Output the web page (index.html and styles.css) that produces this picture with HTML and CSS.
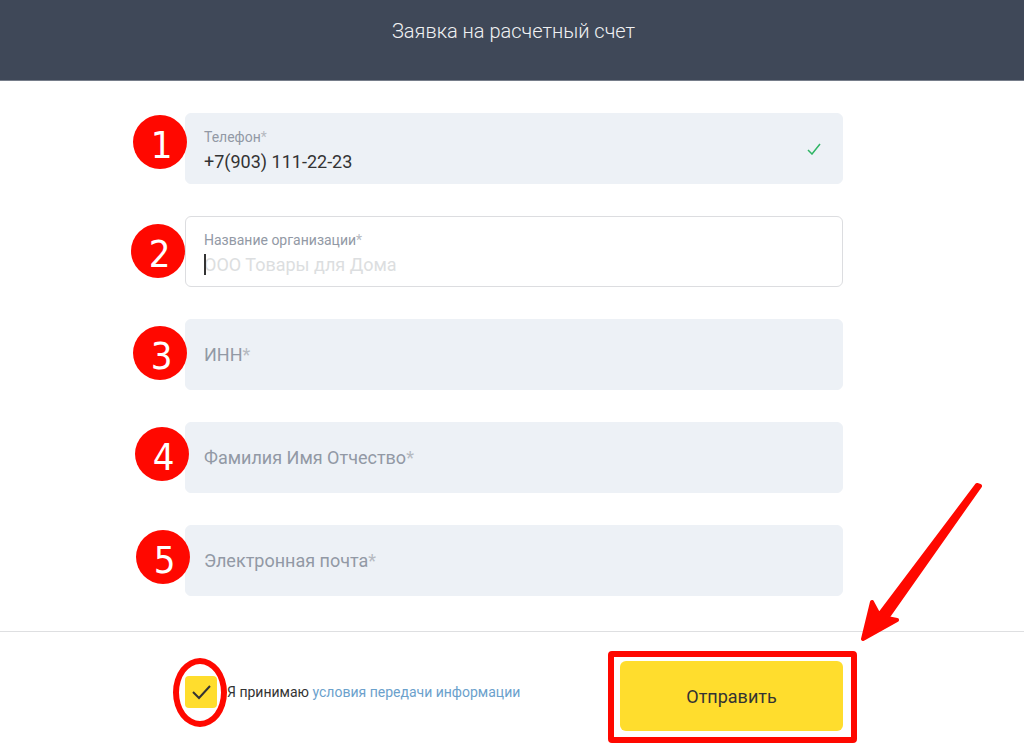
FILE: index.html
```html
<!DOCTYPE html>
<html lang="ru">
<head>
<meta charset="utf-8">
<meta name="viewport" content="width=device-width, initial-scale=1">
<title>Заявка на расчетный счет</title>
<link rel="stylesheet" href="styles.css">
</head>
<body>
<header class="header"><h1 class="title">Заявка на расчетный счет</h1></header>
<form class="form">
  <main class="section">
    <div class="column fields">
      <div class="field">
        <label class="caption small" for="phone">Телефон<span class="star">*</span></label>
        <input class="control filled" id="phone" type="tel" value="+7(903) 111-22-23">
        <svg class="valid" viewBox="0 0 14 12" aria-hidden="true"><path d="M1 7l4 4 8-10"/></svg>
        <span class="badge b1">1</span>
      </div>
      <div class="field active">
        <label class="caption small" for="org">Название организации<span class="star">*</span></label>
        <input class="control filled" id="org" type="text" placeholder="ООО Товары для Дома">
        <span class="caret"></span>
        <span class="badge b2">2</span>
      </div>
      <div class="field">
        <label class="caption" for="inn">ИНН<span class="star">*</span></label>
        <input class="control" id="inn" type="text">
        <span class="badge b3">3</span>
      </div>
      <div class="field">
        <label class="caption" for="name">Фамилия Имя Отчество<span class="star">*</span></label>
        <input class="control" id="name" type="text">
        <span class="badge b4">4</span>
      </div>
      <div class="field">
        <label class="caption" for="mail">Электронная почта<span class="star">*</span></label>
        <input class="control" id="mail" type="email">
        <span class="badge b5">5</span>
      </div>
    </div>
  </main>
  <footer class="section footer">
    <div class="column actions">
      <div class="consent">
        <span class="tick">
          <input class="checkbox" id="agree" type="checkbox" checked>
          <svg class="mark" viewBox="0 0 20 16" aria-hidden="true"><path d="M1 8l6 6L18 2"/></svg>
          <span class="ring"></span>
        </span>
        <span><label for="agree">Я принимаю</label> <a class="link" href="#terms">условия передачи информации</a></span>
      </div>
      <div class="send">
        <button class="submit" type="submit">Отправить</button>
        <span class="frame"></span>
        <svg class="arrow" viewBox="0 0 124 162" aria-hidden="true"><path d="M120 4L27 136L37 138L3 157L12 120L19 133L117 3Z"/></svg>
      </div>
    </div>
  </footer>
</form>
</body>
</html>
```
FILE: styles.css
```css
* { box-sizing: border-box; }
body {
  margin: 0;
  background: #fff;
  color: #333;
  font-family: Roboto, "Liberation Sans", Arial, sans-serif;
  font-size: 14px;
}
.header {
  display: flex;
  justify-content: center;
  height: 81px;
  padding-top: 15px;
  padding-left: 3px;
  border-bottom: 1px solid #767d8a;
  background: #3f4858;
}
.title {
  margin: 0;
  color: #f0f1f3;
  font: 300 20px/32px Roboto, sans-serif;
}
.section { padding: 32px 16px 35px 20px; }
.column { max-width: 658px; margin: 0 auto; }
.fields { display: grid; gap: 32px; }
.field {
  position: relative;
  display: grid;
  height: 71px;
  border: 1px solid #edf1f6;
  border-radius: 6px;
  background: #edf1f6;
}
.field.active { border-color: #dcdde0; background: #fff; }
.caption, .control { grid-area: 1 / 1; }
.caption {
  z-index: 1;
  align-self: center;
  justify-self: start;
  margin-left: 18px;
  color: #9299a5;
  font-size: 18px;
  line-height: 24px;
}
.caption.small {
  align-self: start;
  padding-top: 14px;
  font-size: 14px;
  line-height: 18px;
}
.star { color: #b6bac1; }
.control {
  width: 100%;
  height: 100%;
  min-width: 0;
  padding: 0 18px;
  border: 0;
  outline: 0;
  background: transparent;
  color: #333;
  font: inherit;
  font-size: 18px;
}
.control.filled { padding-top: 25px; }
.control::placeholder { color: #dcdee0; opacity: 1; }
.valid {
  position: absolute;
  top: 29px;
  right: 21px;
  width: 14px;
  height: 12px;
  fill: none;
  stroke: #2fb565;
  stroke-width: 1.5;
}
.caret {
  position: absolute;
  top: 37px;
  left: 18px;
  width: 2px;
  height: 21px;
  background: #333;
}
.badge {
  position: absolute;
  width: 54px;
  height: 54px;
  padding: 3px 0 0 3px;
  border-radius: 50%;
  background: #ff0800;
  color: #fff;
  font: 38px/54px "DejaVu Sans Condensed", "DejaVu Sans", sans-serif;
  text-align: center;
}
.b1 { top: 1px; left: -53px; }
.b2 { top: 7px; left: -55px; }
.b3 { top: 6px; left: -53px; }
.b4 { top: 4px; left: -51px; }
.b5 { top: 4px; left: -50px; }
.footer {
  padding-top: 29px;
  padding-bottom: 13px;
  border-top: 1px solid #dedfe1;
}
.actions { display: flex; justify-content: space-between; align-items: center; }
.consent { display: flex; align-items: center; gap: 10px; padding-bottom: 8px; }
.tick { position: relative; display: flex; }
.checkbox {
  width: 32px;
  height: 32px;
  margin: 0;
  appearance: none;
  border-radius: 4px;
  background: #ffdd2d;
}
.mark {
  position: absolute;
  top: 8px;
  left: 7px;
  width: 20px;
  height: 16px;
  fill: none;
  stroke: #333;
  stroke-width: 2;
  pointer-events: none;
}
.ring {
  position: absolute;
  top: -18px;
  left: -12px;
  width: 54px;
  height: 69px;
  border: 6px solid #ff0800;
  border-radius: 50%;
  pointer-events: none;
}
.link { color: #6ba1cc; text-decoration: none; }
.send { position: relative; }
.submit {
  width: 223px;
  height: 70px;
  border: 0;
  border-radius: 6px;
  background: #ffdd2d;
  color: #333;
  font: inherit;
  font-size: 18px;
}
.frame {
  position: absolute;
  inset: -10px -14px -12px -12px;
  border: 6px solid #ff0800;
  border-radius: 4px;
  pointer-events: none;
}
.arrow {
  position: absolute;
  right: -141px;
  bottom: 87px;
  width: 124px;
  height: 162px;
  fill: #ff0800;
  stroke: #ff0800;
  stroke-width: 4;
  stroke-linejoin: round;
  pointer-events: none;
}
```
